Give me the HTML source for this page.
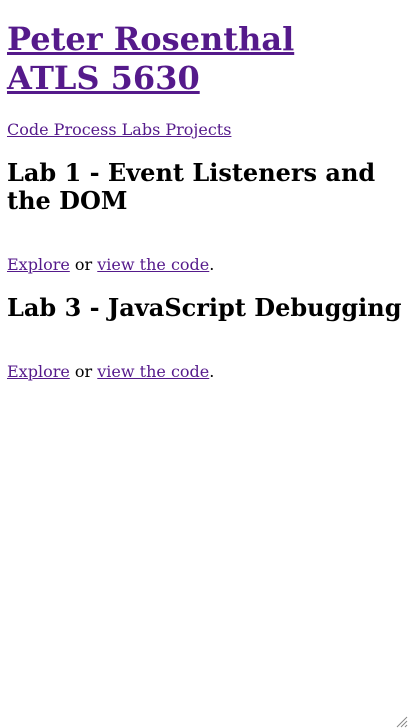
<!DOCTYPE html>
<html><head><meta charset="utf-8"><style>
html,body{margin:0;padding:0;background:#fff}
body{margin:7px;font-family:"DejaVu Serif",serif;font-size:16px;color:#000}
a{color:#551a8b}
h1{font-size:32px;margin:20.44px 0 21.44px;font-weight:bold;line-height:39px}
h2{font-size:24px;margin:19.92px 0;line-height:28px}
p{margin:16px 0}
.sp{height:4px}
.nw{white-space:nowrap}
.grip{position:fixed;right:0;bottom:0}
</style></head><body>
<h1><a href="#">Peter Rosenthal<br>ATLS 5630</a></h1>
<nav><a href="#">Code Process Labs Projects</a></nav>
<h2>Lab 1 - Event Listeners and the DOM</h2>
<div class="sp"></div>
<p><a href="#">Explore</a> or <a href="#">view the code</a>.</p>
<h2 class="nw">Lab 3 - JavaScript Debugging</h2>
<div class="sp"></div>
<p><a href="#">Explore</a> or <a href="#">view the code</a>.</p>
<svg class="grip" width="14" height="14" viewBox="0 0 14 14"><path d="M13 3L3 13M13 7L7 13M13 11L11 13" stroke="#888" stroke-width="1"/></svg>
</body></html>
